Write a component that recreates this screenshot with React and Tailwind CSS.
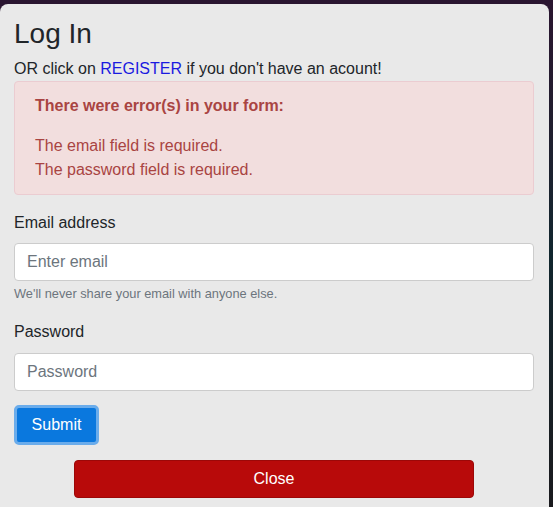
export default function App() {
  return (
    <div className="flex h-[507px] w-[553px] overflow-hidden bg-[#2a1530] font-['Liberation_Sans',Arial,sans-serif]">
      <div className="mt-[4px] flex-1 rounded-t-lg bg-[#e9e9e9] pl-[14px] pr-[15px] pt-[13px] text-[#212529]">
        <h2 className="text-[28px] leading-[34px]">Log In</h2>
        <p className="mt-[6px] text-base leading-6">
          OR click on <a href="#" className="text-[#1a1ae0]">REGISTER</a> if you don't have an acount!
        </p>

        <div className="rounded border border-[#ebccd1] bg-[#f2dede] px-5 pb-3 pt-3 text-[#a94442]">
          <p className="text-base font-bold leading-6">There were error(s) in your form:</p>
          <ul className="mt-4 text-base leading-6">
            <li>The email field is required.</li>
            <li>The password field is required.</li>
          </ul>
        </div>

        <form className="mt-4" onSubmit={e => e.preventDefault()}>
          <div className="mb-[17px]">
            <label className="mb-2 block text-base leading-6">Email address</label>
            <input type="email" placeholder="Enter email"
              className="block h-[38px] w-full rounded border border-[#ccc] bg-white px-3 text-base text-[#495057] placeholder:text-[#6c757d] focus:outline-none"/>
            <small className="mt-[3px] block text-[12.8px] leading-[19px] text-[#6c757d]">We'll never share your email with anyone else.</small>
          </div>
          <div>
            <label className="mb-[9px] block text-base leading-6">Password</label>
            <input type="password" placeholder="Password"
              className="block h-[38px] w-full rounded border border-[#ccc] bg-white px-3 text-base text-[#495057] placeholder:text-[#6c757d] focus:outline-none"/>
          </div>
          <button type="submit"
            className="mt-[14px] h-[40px] w-[85px] rounded-[5px] border-[3px] border-[#6aaceb] bg-[#0a78de] text-base text-white">
            Submit
          </button>
          <div className="mt-[15px] flex justify-center">
            <button type="button" className="h-[38px] w-[400px] rounded border border-[#9c0808] bg-[#b80a0a] text-base text-white">
              Close
            </button>
          </div>
        </form>
      </div>
      <div className="w-[4px] bg-gradient-to-b from-[#2a1530] via-[#10262e] to-[#1a1a1e]"></div>
    </div>
  )
}
